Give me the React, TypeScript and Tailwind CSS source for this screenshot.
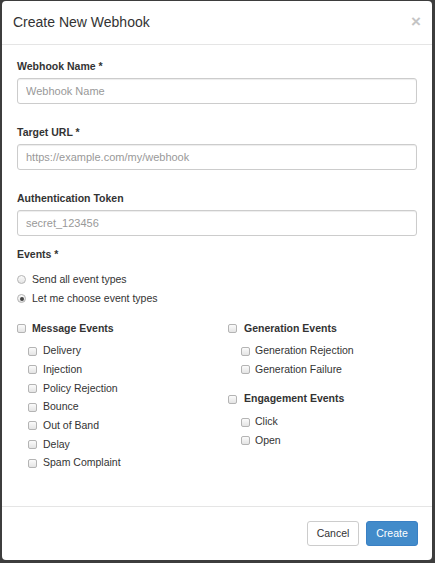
import React from 'react';

const font = { fontFamily: '"Liberation Sans", Arial, sans-serif' };

function Box({ checked = false }: { checked?: boolean }) {
  return (
    <span className="inline-flex h-[9px] w-[9px] shrink-0 items-center justify-center rounded-[2px] border border-[#b4b4b4] bg-gradient-to-b from-[#fbfbfb] to-[#e4e4e4]">
      {checked ? <span className="h-[4px] w-[4px] bg-[#555]" /> : null}
    </span>
  );
}

function Radio({ checked = false }: { checked?: boolean }) {
  return (
    <span className="inline-flex h-[9px] w-[9px] shrink-0 items-center justify-center rounded-full border border-[#b4b4b4] bg-gradient-to-b from-[#fbfbfb] to-[#e4e4e4]">
      {checked ? <span className="h-[4px] w-[4px] rounded-full bg-[#444]" /> : null}
    </span>
  );
}

function Field({ label, placeholder, className = '' }: { label: string; placeholder: string; className?: string }) {
  return (
    <div className={className}>
      <div className="mb-[3px] text-[10.5px] font-bold leading-[17px] text-[#333]">{label}</div>
      <input
        placeholder={placeholder}
        className="block h-[26px] w-full rounded-[3px] border border-[#ccc] px-[8px] text-[11px] text-[#555] shadow-[inset_0_1px_1px_rgba(0,0,0,0.075)] outline-none placeholder:text-[#999]"
        style={font}
      />
    </div>
  );
}

function Group({
  title,
  items,
  indent,
  gap,
  subGap,
}: {
  title: string;
  items: string[];
  indent: string;
  gap: string;
  subGap: string;
}) {
  return (
    <div>
      <div className={`mb-[4px] flex h-[19px] items-center ${gap}`}>
        <Box />
        <span className="text-[10.5px] font-bold text-[#333]">{title}</span>
      </div>
      {items.map((item) => (
        <div key={item} className={`flex h-[18.67px] items-center ${indent} ${subGap}`}>
          <Box />
          <span className="text-[10.5px] text-[#333]">{item}</span>
        </div>
      ))}
    </div>
  );
}

export default function App() {
  return (
    <div className="h-[563px] w-[435px] bg-[#3d3d3d] pb-[3px] pl-[2px] pr-[3px] pt-[1px]" style={font}>
      <div className="flex h-[559px] flex-col rounded-[4px] bg-white">
        <div className="flex h-[44px] items-center justify-between border-b border-[#e5e5e5] pl-[11px] pr-[11px]">
          <h4 className="text-[14px] text-[#333]">Create New Webhook</h4>
          <span className="-mt-[2px] text-[17px] font-bold leading-none text-[#c4c4c4]">×</span>
        </div>

        <div className="flex-1 px-[15px] pt-[13px]">
          <Field label="Webhook Name *" placeholder="Webhook Name" className="mb-[20px]" />
          <Field label="Target URL *" placeholder="https://example.com/my/webhook" className="mb-[20px]" />
          <Field label="Authentication Token" placeholder="secret_123456" className="mb-[10px]" />

          <div className="text-[10.5px] font-bold leading-[17px] text-[#333]">Events *</div>
          <div className="mt-[7px]">
            <label className="flex h-[19px] items-center gap-[6px] text-[10.5px] text-[#333]">
              <Radio /> Send all event types
            </label>
            <label className="flex h-[19px] items-center gap-[6px] text-[10.5px] text-[#333]">
              <Radio checked /> Let me choose event types
            </label>
          </div>

          <div className="mt-[11px] grid grid-cols-2">
            <Group
              title="Message Events"
              indent="pl-[11px]"
              gap="gap-[6px]"
              subGap="gap-[6px]"
              items={['Delivery', 'Injection', 'Policy Rejection', 'Bounce', 'Out of Band', 'Delay', 'Spam Complaint']}
            />
            <div className="pl-[11px]">
              <Group
                title="Generation Events"
                indent="pl-[13px]"
                gap="gap-[7px]"
                subGap="gap-[5px]"
                items={['Generation Rejection', 'Generation Failure']}
              />
              <div className="mt-[10.5px]">
                <Group title="Engagement Events" indent="pl-[13px]" gap="gap-[7px]" subGap="gap-[5px]" items={['Click', 'Open']} />
              </div>
            </div>
          </div>
        </div>

        <div className="flex justify-end gap-[7px] border-t border-[#e5e5e5] pb-[14px] pr-[14px] pt-[14px]">
          <button className="h-[25px] w-[52px] rounded-[3px] border border-[#ccc] bg-white text-[10.5px] text-[#333]">Cancel</button>
          <button className="h-[25px] w-[52px] rounded-[3px] border border-[#3a80c4] bg-[#428bca] text-[10.5px] text-white">Create</button>
        </div>
      </div>
    </div>
  );
}
